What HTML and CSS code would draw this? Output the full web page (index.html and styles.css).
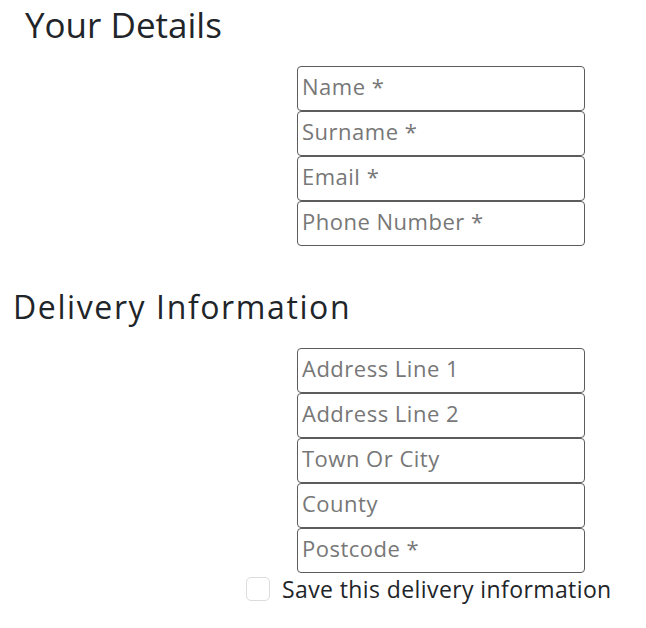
FILE: index.html
```html
<!DOCTYPE html>
<html lang="en">
<head>
<meta charset="utf-8">
<title>Checkout details</title>
<link rel="stylesheet" href="styles.css">
</head>
<body>
<main class="checkout">
  <section class="section section-details">
    <h2 class="section-title title-details">Your Details</h2>
    <div class="fields">
      <input class="field" type="text" placeholder="Name *">
      <input class="field" type="text" placeholder="Surname *">
      <input class="field" type="email" placeholder="Email *">
      <input class="field" type="tel" placeholder="Phone Number *">
    </div>
  </section>
  <section class="section section-delivery">
    <h2 class="section-title title-delivery">Delivery Information</h2>
    <div class="fields">
      <input class="field" type="text" placeholder="Address Line 1">
      <input class="field" type="text" placeholder="Address Line 2">
      <input class="field" type="text" placeholder="Town Or City">
      <input class="field" type="text" placeholder="County">
      <input class="field" type="text" placeholder="Postcode *">
    </div>
    <label class="save-row">
      <input class="save-check" type="checkbox">
      <span class="save-label">Save this delivery information</span>
    </label>
  </section>
</main>
</body>
</html>
```
FILE: styles.css
```css
* { box-sizing: border-box; }

html, body {
  margin: 0;
  padding: 0;
  background: #ffffff;
}

body {
  font-family: "Open Sans", Roboto, sans-serif;
  color: #212529;
}

.checkout {
  display: flex;
  flex-direction: column;
}

.section-title {
  margin: 0;
  font-weight: 400;
  color: #212529;
  line-height: 1.2;
}

.title-details {
  font-size: 35px;
  padding-left: 25px;
  padding-top: 4px;
}

.title-delivery {
  font-size: 32px;
  padding-left: 13px;
  margin-top: 42px;
  letter-spacing: 1.6px;
}

.fields {
  display: flex;
  flex-direction: column;
  width: 288px;
  margin-left: 297px;
}

.section-details .fields { margin-top: 20px; }
.section-delivery .fields { margin-top: 22px; }

.field {
  display: block;
  width: 100%;
  height: 45px;
  margin: 0;
  padding: 0 4px 5px 4px;
  border: 1px solid #5c5c5c;
  border-radius: 4px;
  background: #ffffff;
  font-family: inherit;
  font-size: 22px;
  letter-spacing: 0.5px;
  color: #212529;
  outline: none;
}

.field::placeholder {
  color: #777777;
  opacity: 1;
}

.save-row {
  display: flex;
  align-items: center;
  gap: 12px;
  margin-left: 246px;
  margin-top: 0;
  cursor: pointer;
}

.save-check {
  appearance: none;
  -webkit-appearance: none;
  width: 24px;
  height: 24px;
  margin: 0;
  border: 1px solid #dcdcdc;
  border-radius: 5px;
  background: #ffffff;
  flex: none;
}

.save-label {
  font-size: 23px;
  letter-spacing: 0.4px;
  color: #212529;
}
```
